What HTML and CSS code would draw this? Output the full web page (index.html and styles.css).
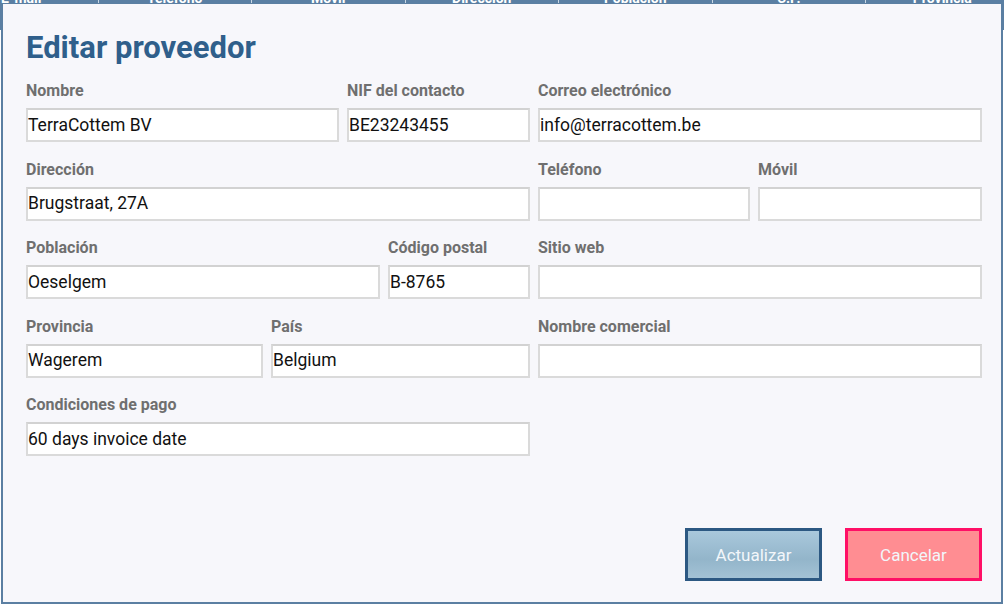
FILE: index.html
```html
<!DOCTYPE html>
<html lang="es">
<head>
<meta charset="utf-8">
<title>Editar proveedor</title>
<link rel="stylesheet" href="styles.css">
</head>
<body>
<div class="grid-head">
  <span class="col">E-mail</span>
  <span class="col">Teléfono</span>
  <span class="col">Móvil</span>
  <span class="col">Dirección</span>
  <span class="col">Población</span>
  <span class="col">C.P.</span>
  <span class="col">Provincia</span>
</div>

<div class="modal">
  <h1 class="title">Editar proveedor</h1>
  <form class="form">
    <div class="row">
      <label class="field w313"><span class="lbl">Nombre</span><input class="inp" value="TerraCottem BV"></label>
      <label class="field w183"><span class="lbl">NIF del contacto</span><input class="inp" value="BE23243455"></label>
      <label class="field w444"><span class="lbl">Correo electrónico</span><input class="inp" value="info@terracottem.be"></label>
    </div>
    <div class="row">
      <label class="field w504"><span class="lbl">Dirección</span><input class="inp" value="Brugstraat, 27A"></label>
      <label class="field w212"><span class="lbl">Teléfono</span><input class="inp" value=""></label>
      <label class="field w224"><span class="lbl">Móvil</span><input class="inp" value=""></label>
    </div>
    <div class="row">
      <label class="field w354"><span class="lbl">Población</span><input class="inp" value="Oeselgem"></label>
      <label class="field w142"><span class="lbl">Código postal</span><input class="inp" value="B-8765"></label>
      <label class="field w444"><span class="lbl">Sitio web</span><input class="inp" value=""></label>
    </div>
    <div class="row">
      <label class="field w237"><span class="lbl">Provincia</span><input class="inp" value="Wagerem"></label>
      <label class="field w259"><span class="lbl">País</span><input class="inp" value="Belgium"></label>
      <label class="field w444"><span class="lbl">Nombre comercial</span><input class="inp" value=""></label>
    </div>
    <div class="row">
      <label class="field w504"><span class="lbl">Condiciones de pago</span><input class="inp" value="60 days invoice date"></label>
    </div>
  </form>
  <div class="actions">
    <button class="btn btn-update" type="button">Actualizar</button>
    <button class="btn btn-cancel" type="button">Cancelar</button>
  </div>
</div>
</body>
</html>
```

FILE: styles.css
```css
* { box-sizing: border-box; }

html, body {
  margin: 0;
  padding: 0;
  width: 1004px;
  height: 606px;
  overflow: hidden;
  background: #ffffff;
  font-family: Roboto, "Liberation Sans", sans-serif;
}

/* table header behind the dialog */
.grid-head {
  display: flex;
  height: 30px;
  margin-left: -55px;
  background: #5a7fa3;
}
.grid-head .col {
  flex: 0 0 153.5px;
  text-align: center;
  color: #ffffff;
  font-size: 14px;
  font-weight: 700;
  line-height: 14px;
  margin-top: -9px;
  border-right: 1px solid #c9d7e4;
}

/* dialog */
.modal {
  position: absolute;
  left: 1px;
  top: 3px;
  width: 1002px;
  height: 601px;
  border: 2px solid #5b7fa2;
  border-top-width: 1px;
  background: #f7f7fb;
  padding: 25px 19px 21px 23px;
  display: flex;
  flex-direction: column;
}

.title {
  margin: 0;
  font-size: 31px;
  line-height: 37px;
  font-weight: 700;
  color: #2f5f8b;
}

.form {
  margin-top: 16px;
  display: flex;
  flex-direction: column;
  gap: 18.5px;
}

.row {
  display: flex;
  gap: 8px;
}

.field {
  display: flex;
  flex-direction: column;
  flex: none;
}
.w142 { width: 142px; }
.w183 { width: 183px; }
.w212 { width: 212px; }
.w224 { width: 224px; }
.w237 { width: 237px; }
.w259 { width: 259px; }
.w313 { width: 313px; }
.w354 { width: 354px; }
.w444 { width: 444px; }
.w504 { width: 504px; }

.lbl {
  font-size: 16px;
  line-height: 18px;
  font-weight: 700;
  color: #6f6f6f;
  margin-bottom: 8px;
}

.inp {
  height: 34px;
  width: 100%;
  margin: 0;
  border: 2px solid #dadada;
  border-top-color: #d2d2d2;
  background: #ffffff;
  padding: 0 0 1px 0;
  font-family: Roboto, "Liberation Sans", sans-serif;
  font-size: 17.5px;
  color: #111111;
  outline: none;
}

.actions {
  margin-top: auto;
  display: flex;
  justify-content: flex-end;
  gap: 23px;
}

.btn {
  width: 137px;
  height: 53px;
  border: 3px solid;
  font-family: Roboto, "Liberation Sans", sans-serif;
  font-size: 17px;
  color: #f2f6fa;
  padding: 0;
  cursor: pointer;
}
.btn-update {
  border-color: #2c5882;
  background: linear-gradient(#a9c8dc, #93b5ca 60%, #a3c2d5);
}
.btn-cancel {
  border-color: #ff0f66;
  background: #ff8d92;
}
```
